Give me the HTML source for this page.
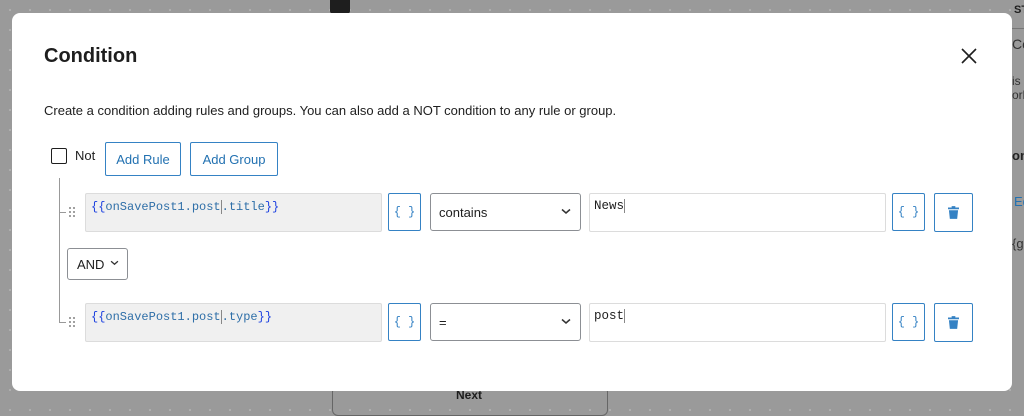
<!DOCTYPE html>
<html><head><meta charset="utf-8"><style>
*{box-sizing:border-box;margin:0;padding:0}
body{width:1024px;height:406px;overflow:hidden;background:#9a9a9a;font-family:"Liberation Sans",sans-serif;position:relative;
background-image:radial-gradient(#b5b5b5 1px,transparent 1px);background-size:20px 20px}
.a{position:absolute}
.modal{left:12px;top:13px;width:1000px;height:378px;background:#fff;border-radius:8px}
.btn{border:1px solid #3582c4;border-radius:2px;color:#2271b1;font-size:13px;display:flex;align-items:center;justify-content:center;background:#fff}
.inp{border:1px solid #dcdcdc;border-radius:2px}
.mono{font-family:"Liberation Mono",monospace;font-size:12px}
.sel{border:1px solid #8c8f94;border-radius:3px;font-size:13px;color:#1e1e1e;padding-left:8px;display:flex;align-items:center;background:#fff}
.chev{position:absolute;right:9px;top:50%;margin-top:-4px}
.cb{border:1px solid #3582c4;border-radius:2px;color:#3582c4;font-family:"Liberation Mono",monospace;font-size:12px;display:flex;align-items:center;justify-content:center;background:#fff}
.dots{width:8px;height:12px;background-image:radial-gradient(#999 1px,transparent 1.2px);background-size:4px 4px}
</style></head><body>
<div class="a" style="left:330px;top:0;width:20px;height:14px;background:#1e1e1e;border-radius:0 0 3px 3px"></div>
<div class="a" style="left:1014px;top:4px;font-size:11px;font-weight:bold;color:#1e1e1e">STEP</div>
<div class="a" style="left:1012px;top:28px;width:12px;border-top:1px solid #777"></div>
<div class="a" style="left:1012px;top:36px;font-size:14px;color:#333">Co</div>
<div class="a" style="left:1012px;top:74px;font-size:12px;color:#333">is<br>ork</div>
<div class="a" style="left:1012px;top:148px;font-size:13px;font-weight:bold;color:#222">on</div>
<div class="a" style="left:1014px;top:194px;font-size:13px;color:#2271b1">Ed</div>
<div class="a" style="left:1012px;top:236px;font-size:13px;color:#333">{g</div>
<div class="a" style="left:456px;top:388px;font-size:12px;font-weight:bold;color:#1e1e1e">Next</div>
<div class="a" style="left:332px;top:386px;width:276px;height:30px;border:1px solid #666;border-radius:6px"></div>
<div class="a modal"></div>
<div class="a" style="left:44px;top:45px;font-size:20px;font-weight:bold;color:#1e1e1e">Condition</div>
<svg class="a" style="left:960px;top:47px" width="18" height="18" viewBox="0 0 18 18"><path d="M2 2L16 16M16 2L2 16" stroke="#1e1e1e" stroke-width="1.6"/></svg>
<div class="a" style="left:44px;top:103px;font-size:13px;color:#1e1e1e">Create a condition adding rules and groups. You can also add a NOT condition to any rule or group.</div>
<div class="a" style="left:51px;top:148px;width:16px;height:16px;border:1.5px solid #1e1e1e;border-radius:2px"></div>
<div class="a" style="left:75px;top:148px;font-size:13px;color:#1e1e1e">Not</div>
<div class="a btn" style="left:105px;top:142px;width:76px;height:34px">Add Rule</div>
<div class="a btn" style="left:190px;top:142px;width:88px;height:34px">Add Group</div>
<div class="a" style="left:59px;top:178px;width:1px;height:145px;background:#999"></div>
<div class="a" style="left:59px;top:212px;width:7px;height:1px;background:#999"></div>
<div class="a" style="left:59px;top:322px;width:7px;height:1px;background:#999"></div>
<!-- row 1 -->
<div class="a dots" style="left:68px;top:206px"></div>
<div class="a inp" style="left:85px;top:193px;width:297px;height:39px;background:#f0f0f0"></div>
<div class="a mono" style="left:91px;top:200px;color:#555"><span style="color:#1a3fe0">{{</span><span style="color:#2f6fa8">onSavePost1.post</span><span style="border-left:1px solid #888"></span><span style="color:#2f6fa8">.title</span><span style="color:#1a3fe0">}}</span></div>
<div class="a cb" style="left:388px;top:193px;width:33px;height:38px">{ }</div>
<div class="a sel" style="left:430px;top:193px;width:151px;height:38px">contains<svg class="chev" width="10" height="7" viewBox="0 0 10 7"><path d="M1 1.5L5 5L9 1.5" stroke="#333" fill="none" stroke-width="1.5"/></svg></div>
<div class="a inp" style="left:589px;top:193px;width:297px;height:39px"></div>
<div class="a mono" style="left:594px;top:199px;color:#1e1e1e;font-size:12.5px">News<span style="border-left:1px solid #888"></span></div>
<div class="a cb" style="left:892px;top:193px;width:33px;height:38px">{ }</div>
<div class="a btn" style="left:934px;top:193px;width:39px;height:39px"><svg width="11" height="13" viewBox="0 0 12 14"><path d="M4 0h4v1.5h4v2H0v-2h4z M1 4.5h10l-1 9.5H2z" fill="#3582c4"/></svg></div>
<!-- AND -->
<div class="a sel" style="left:67px;top:248px;width:61px;height:32px;padding-left:9px">AND<svg class="chev" style="right:8px" width="9" height="6" viewBox="0 0 10 7"><path d="M1 1.5L5 5L9 1.5" stroke="#333" fill="none" stroke-width="1.5"/></svg></div>
<!-- row 2 -->
<div class="a dots" style="left:68px;top:316px"></div>
<div class="a inp" style="left:85px;top:303px;width:297px;height:39px;background:#f0f0f0"></div>
<div class="a mono" style="left:91px;top:310px;color:#555"><span style="color:#1a3fe0">{{</span><span style="color:#2f6fa8">onSavePost1.post</span><span style="border-left:1px solid #888"></span><span style="color:#2f6fa8">.type</span><span style="color:#1a3fe0">}}</span></div>
<div class="a cb" style="left:388px;top:303px;width:33px;height:38px">{ }</div>
<div class="a sel" style="left:430px;top:303px;width:151px;height:38px">=<svg class="chev" width="10" height="7" viewBox="0 0 10 7"><path d="M1 1.5L5 5L9 1.5" stroke="#333" fill="none" stroke-width="1.5"/></svg></div>
<div class="a inp" style="left:589px;top:303px;width:297px;height:39px"></div>
<div class="a mono" style="left:594px;top:309px;color:#1e1e1e;font-size:12.5px">post<span style="border-left:1px solid #888"></span></div>
<div class="a cb" style="left:892px;top:303px;width:33px;height:38px">{ }</div>
<div class="a btn" style="left:934px;top:303px;width:39px;height:39px"><svg width="11" height="13" viewBox="0 0 12 14"><path d="M4 0h4v1.5h4v2H0v-2h4z M1 4.5h10l-1 9.5H2z" fill="#3582c4"/></svg></div>
</body></html>
